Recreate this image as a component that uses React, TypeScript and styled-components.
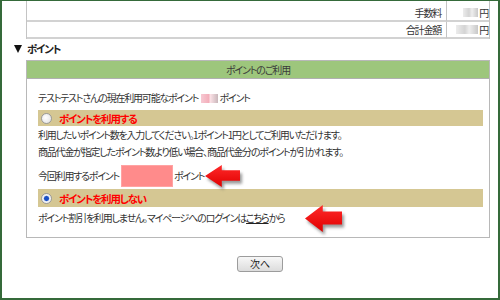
import styled, { createGlobalStyle } from "styled-components";

const GlobalStyle = createGlobalStyle`
	html, body {
		margin: 0;
		padding: 0;
		background: #fff;
	}
	body {
		font: 10px "Noto Sans CJK JP", "Noto Sans", sans-serif;
		font-feature-settings: "palt";
		letter-spacing: -1.2px;
		color: #333;
	}
`;

const Frame = styled.div`
	width: 500px;
	height: 300px;
	box-sizing: border-box;
	border: 2px solid #356a3a;
	border-top-width: 1px;
	padding: 0 8px 0 24px;
	background: #fff;
	overflow: hidden;
`;

const Summary = styled.div`
	display: grid;
	grid-template-columns: 1fr 42px;
	border-left: 1px solid #c4c4c4;
	border-right: 1px solid #c4c4c4;
`;

const SummaryLabel = styled.div<{ first?: boolean }>`
	height: 15px;
	line-height: 15px;
	padding: ${({ first }) => (first ? "4px 5px 0 0" : "0 5px 0 0")};
	text-align: right;
	border-bottom: 2px solid #d2d2d2;
	border-right: 1px solid #c4c4c4;
`;

const SummaryValue = styled(SummaryLabel)`
	border-right: none;
	padding-right: 1px;
	display: flex;
	justify-content: flex-end;
	align-items: center;
`;

const Blur = styled.span<{ w: number; tint?: string }>`
	display: inline-block;
	width: ${({ w }) => w}px;
	height: 9px;
	margin-right: 1px;
	background: ${({ tint }) =>
		tint === "pink"
			? "linear-gradient(90deg, #f7c9d3 0%, #f3aeba 45%, #fbe1e6 55%, #c9b7bb 100%)"
			: "linear-gradient(90deg, #ececec 0%, #d4d4d4 40%, #eeeeee 60%, #c8c8c8 100%)"};
	filter: blur(0.6px);
	vertical-align: middle;
`;

const Heading = styled.div`
	margin: 3px 0 4px -12px;
	line-height: 14px;
	font-weight: bold;
	font-size: 10.5px;
	color: #222;
	display: flex;
	align-items: center;
	gap: 5px;
`;

const Triangle = styled.span`
	width: 0;
	height: 0;
	border-left: 4.5px solid transparent;
	border-right: 4.5px solid transparent;
	border-top: 8px solid #111;
`;

const Box = styled.div`
	border: 1px solid #b8b8b8;
`;

const BoxHeader = styled.div`
	height: 17px;
	line-height: 17px;
	background: #9dc67c;
	border-bottom: 1px solid #b0b0b0;
	text-align: center;
	color: #3a3a3a;
`;

const BoxBody = styled.div`
	padding: 11px 6px 11px 11px;
`;

const Line = styled.div<{ h?: number; mt?: number }>`
	position: relative;
	line-height: ${({ h }) => h ?? 16}px;
	margin-top: ${({ mt }) => mt ?? 0}px;
	white-space: nowrap;
	display: flex;
	align-items: center;
`;

const OptionBar = styled.div<{ h: number; mt: number }>`
	height: ${({ h }) => h}px;
	margin-top: ${({ mt }) => mt}px;
	background: #d5c793;
	display: flex;
	align-items: center;
	padding-left: 3px;
	gap: 7px;
	color: #f00;
	font-weight: bold;
	font-size: 10.5px;
`;

const Radio = styled.span<{ checked?: boolean }>`
	width: 9px;
	height: 9px;
	border-radius: 50%;
	border: 1px solid #9a9a9a;
	background: ${({ checked }) =>
		checked
			? "radial-gradient(circle, #1a4fc4 0 2px, #7f9fe0 2.6px, #f2f2f2 3.2px)"
			: "radial-gradient(circle at 40% 40%, #ffffff 0, #dedede 100%)"};
	flex: none;
`;

const PointInput = styled.span`
	display: inline-block;
	width: 52px;
	height: 22px;
	margin: 0 1px 0 2px;
	background: #ff8b8b;
	border: 1px solid #ffa3a3;
	box-sizing: border-box;
`;

const Link = styled.a`
	color: #222;
	text-decoration: underline;
`;

const Arrow = styled.svg<{ left: number; top: number }>`
	position: absolute;
	left: ${({ left }) => left}px;
	top: ${({ top }) => top}px;
	overflow: visible;
`;

const Footer = styled.div`
	display: flex;
	justify-content: center;
	padding: 18px 0 0 4px;
`;

const NextButton = styled.button`
	width: 46px;
	height: 16px;
	padding: 0;
	font: 10px "Noto Sans CJK JP", sans-serif;
	line-height: 14px;
	color: #222;
	border: 1px solid #9c9c9c;
	border-radius: 3px;
	background: linear-gradient(#f7f7f7, #dcdcdc);
`;

const RedArrow = ({ left, top, w, h }: { left: number; top: number; w: number; h: number }) => {
	const head = w * 0.48;
	const tailTop = h * 0.24;
	const tailBottom = h * 0.72;
	const d = `M0 ${h / 2} L${head} 0 L${head} ${tailTop} L${w} ${tailTop} L${w} ${tailBottom} L${head} ${tailBottom} L${head} ${h} Z`;
	return (
		<Arrow left={left} top={top} width={w} height={h} viewBox={`0 0 ${w} ${h}`}>
			<defs>
				<filter id={`sh${left}`} x="-30%" y="-30%" width="160%" height="160%">
					<feGaussianBlur stdDeviation="1.5" />
				</filter>
				<linearGradient id={`g${left}`} x1="0" y1="0" x2="0" y2="1">
					<stop offset="0" stopColor="#ff2a2a" />
					<stop offset="1" stopColor="#e00000" />
				</linearGradient>
			</defs>
			<path d={d} fill="#555" opacity="0.6" transform="translate(2 3)" filter={`url(#sh${left})`} />
			<path d={d} fill={`url(#g${left})`} />
		</Arrow>
	);
};

export default function App() {
	return (
		<>
			<GlobalStyle />
			<Frame>
				<Summary>
					<SummaryLabel first>手数料</SummaryLabel>
					<SummaryValue first>
						<Blur w={15} />円
					</SummaryValue>
					<SummaryLabel>合計金額</SummaryLabel>
					<SummaryValue>
						<Blur w={22} />円
					</SummaryValue>
				</Summary>
				<Heading>
					<Triangle />
					ポイント
				</Heading>
				<Box>
					<BoxHeader>ポイントのご利用</BoxHeader>
					<BoxBody>
						<Line>
							テストテストさんの現在利用可能なポイント&nbsp;&nbsp;&nbsp;
							<Blur w={17} tint="pink" />
							ポイント
						</Line>
						<OptionBar h={16} mt={4}>
							<Radio />
							ポイントを利用する
						</OptionBar>
						<Line h={17}>利用したいポイント数を入力してください。1ポイント1円としてご利用いただけます。</Line>
						<Line h={17}>商品代金が指定したポイント数より低い場合、商品代金分のポイントが引かれます。</Line>
						<Line h={22} mt={5}>
							今回利用するポイント
							<PointInput />
							ポイント
							<RedArrow left={167} top={0} w={35} h={22} />
						</Line>
						<OptionBar h={18} mt={2}>
							<Radio checked />
							ポイントを利用しない
						</OptionBar>
						<Line mt={3}>
							ポイント割引を利用しません。マイページへのログインは<Link href="#">こちら</Link>から
							<RedArrow left={267} top={-5} w={37} h={27} />
						</Line>
					</BoxBody>
				</Box>
				<Footer>
					<NextButton type="button">次へ</NextButton>
				</Footer>
			</Frame>
		</>
	);
}
